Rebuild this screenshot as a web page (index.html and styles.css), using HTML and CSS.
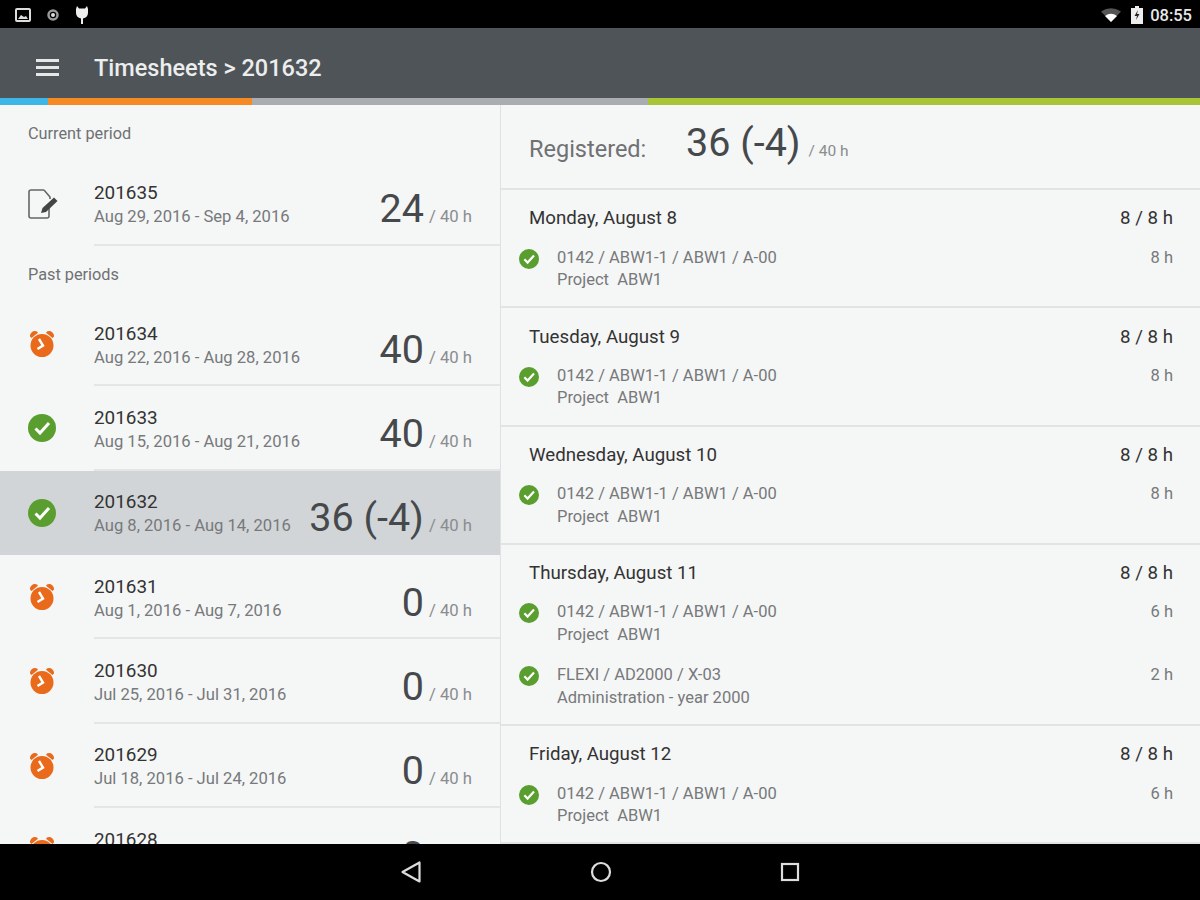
FILE: index.html
```html
<!DOCTYPE html>
<html lang="en">
<head>
  <meta charset="UTF-8">
  <title>Timesheets</title>
  <link rel="stylesheet" href="styles.css">
</head>
<body>
  <svg class="defs" width="0" height="0">
    <symbol id="ok" viewBox="0 0 28 28">
      <circle cx="14" cy="14" r="14" fill="#5a9e2f"/>
      <path d="M7.500 14.500l4.500 4.500 9-10" fill="none" stroke="#fff" stroke-width="3"/>
    </symbol>
    <symbol id="alarm" viewBox="0 0 26 28">
      <circle cx="13" cy="15.500" r="11.500" fill="#ea6a1c"/>
      <path d="M1 6.500A5 5 0 0 1 8 1.500L9 2.800 2.500 8z M25 6.500A5 5 0 0 0 18 1.500L17 2.800 23.500 8z" fill="#ea6a1c"/>
      <path d="M10 9l4 6.500-5.500 3.500" fill="none" stroke="#fff" stroke-width="2.400"/>
    </symbol>
  </svg>

  <div class="statusbar">
    <div class="status-left">
      <svg width="16" height="16" viewBox="0 0 16 16"><rect x="1" y="2" width="14" height="12" rx="1" fill="none" stroke="#ddd" stroke-width="2"/><path d="M3 12l3-4 3 2 2-1 2 3z" fill="#ddd"/></svg>
      <svg width="16" height="16" viewBox="0 0 16 16"><circle cx="8" cy="8" r="4.500" fill="none" stroke="#999" stroke-width="2.500"/><circle cx="8" cy="8" r="2" fill="#ddd"/></svg>
      <svg width="14" height="20" viewBox="0 0 14 20"><path d="M2 1l2 2.500h6L12 1l1 3v4a6 6 0 0 1-5 5.500V19H6v-5.500A6 6 0 0 1 1 8V4z" fill="#eee"/></svg>
    </div>
    <div class="status-right">
      <svg class="wifi" width="20" height="14" viewBox="0 0 20 14"><path d="M0 3.500Q10-3 20 3.500L10 14z" fill="#555"/><path d="M4 8Q10 3.500 16 8L10 14z" fill="#fff"/></svg>
      <svg width="12" height="18" viewBox="0 0 12 18"><path d="M4 0h4v2h4v16H0V2h4z" fill="#eee"/><path d="M7 4L3.500 10H6l-1 4 3.500-6H6z" fill="#222"/></svg>
      <span>08:55</span>
    </div>
  </div>

  <header class="toolbar">
    <div class="burger"><i></i><i></i><i></i></div>
    <h1>Timesheets &gt; 201632</h1>
  </header>

  <div class="strip">
    <div class="strip-blue"></div>
    <div class="strip-orange"></div>
    <div class="strip-grey"></div>
    <div class="strip-green"></div>
  </div>

  <main class="content">
    <section class="periods">
      <h2 class="current-label">Current period</h2>
      <div class="period current">
        <svg class="icon icon-doc" width="30" height="30" viewBox="0 0 30 30">
          <path d="M16 1H3a2 2 0 0 0-2 2v24a2 2 0 0 0 2 2h16a2 2 0 0 0 2-2v-8M16 1l6 7v2" fill="none" stroke="#666" stroke-width="1.600"/>
          <path d="M13 24l1.500-5L26 8.500l3.500 3.500L18 23z" fill="#444"/>
        </svg>
        <div class="period-main">
          <div class="period-text"><div class="name">201635</div><div class="dates">Aug 29, 2016 - Sep 4, 2016</div></div>
          <div class="hours"><b>24</b><small>/ 40 h</small></div>
        </div>
      </div>
      <h2 class="past-label">Past periods</h2>
      <div class="period">
        <svg class="icon icon-alarm" width="26" height="28"><use href="#alarm"/></svg>
        <div class="period-main">
          <div class="period-text"><div class="name">201634</div><div class="dates">Aug 22, 2016 - Aug 28, 2016</div></div>
          <div class="hours"><b>40</b><small>/ 40 h</small></div>
        </div>
      </div>
      <div class="period">
        <svg class="icon" width="28" height="28"><use href="#ok"/></svg>
        <div class="period-main">
          <div class="period-text"><div class="name">201633</div><div class="dates">Aug 15, 2016 - Aug 21, 2016</div></div>
          <div class="hours"><b>40</b><small>/ 40 h</small></div>
        </div>
      </div>
      <div class="period selected">
        <svg class="icon" width="28" height="28"><use href="#ok"/></svg>
        <div class="period-main">
          <div class="period-text"><div class="name">201632</div><div class="dates">Aug 8, 2016 - Aug 14, 2016</div></div>
          <div class="hours"><b>36 (-4)</b><small>/ 40 h</small></div>
        </div>
      </div>
      <div class="period">
        <svg class="icon icon-alarm" width="26" height="28"><use href="#alarm"/></svg>
        <div class="period-main">
          <div class="period-text"><div class="name">201631</div><div class="dates">Aug 1, 2016 - Aug 7, 2016</div></div>
          <div class="hours"><b>0</b><small>/ 40 h</small></div>
        </div>
      </div>
      <div class="period">
        <svg class="icon icon-alarm" width="26" height="28"><use href="#alarm"/></svg>
        <div class="period-main">
          <div class="period-text"><div class="name">201630</div><div class="dates">Jul 25, 2016 - Jul 31, 2016</div></div>
          <div class="hours"><b>0</b><small>/ 40 h</small></div>
        </div>
      </div>
      <div class="period">
        <svg class="icon icon-alarm" width="26" height="28"><use href="#alarm"/></svg>
        <div class="period-main">
          <div class="period-text"><div class="name">201629</div><div class="dates">Jul 18, 2016 - Jul 24, 2016</div></div>
          <div class="hours"><b>0</b><small>/ 40 h</small></div>
        </div>
      </div>
      <div class="period">
        <svg class="icon icon-alarm" width="26" height="28"><use href="#alarm"/></svg>
        <div class="period-main">
          <div class="period-text"><div class="name">201628</div><div class="dates">Jul 11, 2016 - Jul 17, 2016</div></div>
          <div class="hours"><b>0</b><small>/ 40 h</small></div>
        </div>
      </div>
    </section>

    <section class="detail">
      <div class="summary">
        <span class="summary-label">Registered:</span>
        <div class="hours"><b>36 (-4)</b><small>/ 40 h</small></div>
      </div>

      <div class="day">
        <div class="day-head"><span>Monday, August 8</span><span>8 / 8 h</span></div>
        <div class="entry">
          <svg class="entry-icon" width="20" height="20"><use href="#ok"/></svg>
          <div class="entry-text">0142 / ABW1-1 / ABW1 / A-00<br>Project&nbsp; ABW1</div>
          <div class="entry-hours">8 h</div>
        </div>
      </div>

      <div class="day">
        <div class="day-head"><span>Tuesday, August 9</span><span>8 / 8 h</span></div>
        <div class="entry">
          <svg class="entry-icon" width="20" height="20"><use href="#ok"/></svg>
          <div class="entry-text">0142 / ABW1-1 / ABW1 / A-00<br>Project&nbsp; ABW1</div>
          <div class="entry-hours">8 h</div>
        </div>
      </div>

      <div class="day">
        <div class="day-head"><span>Wednesday, August 10</span><span>8 / 8 h</span></div>
        <div class="entry">
          <svg class="entry-icon" width="20" height="20"><use href="#ok"/></svg>
          <div class="entry-text">0142 / ABW1-1 / ABW1 / A-00<br>Project&nbsp; ABW1</div>
          <div class="entry-hours">8 h</div>
        </div>
      </div>

      <div class="day">
        <div class="day-head"><span>Thursday, August 11</span><span>8 / 8 h</span></div>
        <div class="entry">
          <svg class="entry-icon" width="20" height="20"><use href="#ok"/></svg>
          <div class="entry-text">0142 / ABW1-1 / ABW1 / A-00<br>Project&nbsp; ABW1</div>
          <div class="entry-hours">6 h</div>
        </div>
        <div class="entry">
          <svg class="entry-icon" width="20" height="20"><use href="#ok"/></svg>
          <div class="entry-text">FLEXI / AD2000 / X-03<br>Administration - year 2000</div>
          <div class="entry-hours">2 h</div>
        </div>
      </div>

      <div class="day">
        <div class="day-head"><span>Friday, August 12</span><span>8 / 8 h</span></div>
        <div class="entry">
          <svg class="entry-icon" width="20" height="20"><use href="#ok"/></svg>
          <div class="entry-text">0142 / ABW1-1 / ABW1 / A-00<br>Project&nbsp; ABW1</div>
          <div class="entry-hours">6 h</div>
        </div>
      </div>
    </section>
  </main>

  <nav class="navbar">
    <svg width="22" height="24" viewBox="0 0 22 24"><path d="M19.500 2.500v19L2.500 12z" fill="none" stroke="#ddd" stroke-width="2.200" stroke-linejoin="round"/></svg>
    <svg width="22" height="22" viewBox="0 0 22 22"><circle cx="11" cy="11" r="9" fill="none" stroke="#ddd" stroke-width="2.200"/></svg>
    <svg width="20" height="20" viewBox="0 0 20 20"><rect x="2" y="2" width="16" height="16" fill="none" stroke="#ddd" stroke-width="2.200"/></svg>
  </nav>
</body>
</html>
```

FILE: styles.css
```css
* {
  box-sizing: border-box;
}
html, body {
  margin: 0;
  height: 900px;
  overflow: hidden;
}
body {
  display: flex;
  flex-direction: column;
  font-family: Roboto, "Liberation Sans", sans-serif;
  background-color: #f5f6f6;
  color: #333;
}
.defs {
  display: none;
}

/* status bar */
.statusbar {
  flex: 0 0 28px;
  background-color: #000;
  display: flex;
  justify-content: space-between;
  align-items: center;
  padding: 2px 8px 0 15px;
}
.status-left, .status-right {
  display: flex;
  align-items: center;
}
.status-left {
  gap: 14px;
}
.status-right {
  gap: 7px;
  color: #e8e8e8;
  font-size: 16.500px;
  font-weight: 500;
}
.wifi {
  margin-right: 3px;
}

/* toolbar */
.toolbar {
  flex: 0 0 70px;
  background-color: #4f5459;
  display: flex;
  align-items: center;
  padding: 9px 0 0 36px;
  color: #eceded;
}
.burger {
  width: 23px;
  margin-right: 35px;
  display: flex;
  flex-direction: column;
  gap: 4px;
}
.burger i {
  display: block;
  height: 3px;
  background-color: #e6e7e7;
}
.toolbar h1 {
  margin: 0;
  font-size: 23.500px;
  font-weight: 500;
}

/* coloured strip */
.strip {
  flex: 0 0 7px;
  display: flex;
}
.strip-blue { width: 48px; background-color: #3db5e6; }
.strip-orange { width: 204px; background-color: #f58a24; }
.strip-grey { width: 396px; background-color: #a9adb0; }
.strip-green { flex: 1; background-color: #a8c538; }

/* main */
.content {
  flex: 0 0 739px;
  display: flex;
  overflow: hidden;
}
.periods {
  width: 501px;
  border-right: 1px solid #e0e2e2;
  overflow: hidden;
}
.periods h2 {
  margin: 0;
  font-size: 16.300px;
  font-weight: 400;
  color: #6f7173;
  padding-left: 28px;
  line-height: 20px;
}
.current-label {
  padding-top: 19px;
  height: 38px;
}
.past-label {
  padding-top: 19px;
  height: 56.400px;
}
.period {
  height: 84.350px;
  display: flex;
  align-items: center;
}
.period.current {
  height: 102.500px;
  padding-top: 19px;
}
.icon {
  flex: 0 0 auto;
  margin-left: 28px;
  margin-right: 38px;
}
.icon-alarm {
  margin-left: 29px;
  margin-right: 39px;
}
.icon-doc {
  margin-right: 36px;
}
.period-main {
  flex: 1;
  align-self: stretch;
  display: flex;
  justify-content: space-between;
  align-items: center;
  padding-right: 28px;
  border-bottom: 2px solid #e4e6e6;
  height: 100%;
}
.period.selected {
  background-color: #d1d5d7;
}
.period.selected .period-main {
  border-bottom-color: transparent;
}
.period-text {
  padding-top: 5px;
}
.name {
  font-size: 18.900px;
  line-height: 24px;
  color: #333;
}
.dates {
  font-size: 16.600px;
  line-height: 24px;
  color: #77797b;
}
.hours {
  display: flex;
  align-items: baseline;
  gap: 5px;
  white-space: nowrap;
}
.period .hours {
  padding-top: 12px;
}
.hours b {
  font-size: 39.500px;
  font-weight: 400;
  color: #46494c;
}
.hours small {
  font-size: 16.700px;
  color: #8a8c8e;
}

/* right side */
.detail {
  flex: 1;
  overflow: hidden;
}
.summary {
  height: 85px;
  border-bottom: 2px solid #e2e4e4;
  display: flex;
  align-items: center;
  padding-left: 28px;
  padding-bottom: 8px;
}
.summary .hours {
  gap: 8px;
}
.summary .hours small {
  font-size: 15.500px;
}
.summary-label {
  font-size: 23.500px;
  color: #6f7173;
  width: 157px;
  padding-top: 12px;
}
.day {
  border-bottom: 2px solid #e2e4e4;
  padding: 0 27px 4.800px 28px;
}
.day-head {
  display: flex;
  justify-content: space-between;
  align-items: center;
  height: 56.500px;
  font-size: 18.700px;
  color: #333;
}
.entry {
  display: flex;
  align-items: flex-start;
  height: 55px;
  margin-bottom: 8px;
  font-size: 16.500px;
  line-height: 22.500px;
  color: #77797b;
}
.entry:last-child {
  margin-bottom: 0;
}
.entry-icon {
  flex: 0 0 auto;
  margin: 2px 18px 0 -10px;
}
.entry-text {
  flex: 1;
}

/* nav bar */
.navbar {
  flex: 0 0 56px;
  background-color: #000;
  display: flex;
  align-items: center;
  justify-content: center;
  gap: 168px;
}
```
